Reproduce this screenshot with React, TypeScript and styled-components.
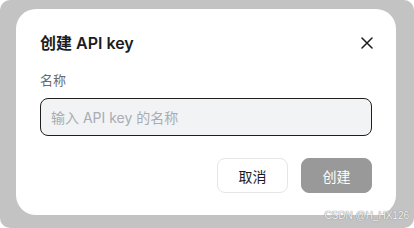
import React, { useState } from 'react';
import styled, { createGlobalStyle } from 'styled-components';

const GlobalStyle = createGlobalStyle`
  html, body {
    margin: 0;
    padding: 0;
    background: #ffffff;
  }
  body {
    font-family: "Inter", "Noto Sans CJK SC", sans-serif;
  }
`;

const Backdrop = styled.div`
  position: relative;
  width: 414px;
  height: 228px;
  box-sizing: border-box;
  padding: 9px 18px 13px 16px;
  background: #c3c3c3;
  border-radius: 10px;
  display: flex;
`;

const Dialog = styled.div`
  flex: 1;
  background: #ffffff;
  border-radius: 20px;
  padding: 22px 24px 22px 24px;
  display: flex;
  flex-direction: column;
`;

const Header = styled.div`
  display: flex;
  align-items: center;
  justify-content: space-between;
  height: 24px;
`;

const Title = styled.h2`
  margin: 0;
  font-size: 16px;
  line-height: 24px;
  font-weight: 600;
  color: #1c1c1e;
`;

const CloseButton = styled.button`
  width: 16px;
  height: 16px;
  margin-right: -3px;
  padding: 0;
  border: none;
  background: transparent;
  display: flex;
  align-items: center;
  justify-content: center;
  color: #1c1c1e;
  cursor: pointer;
`;

const Label = styled.label`
  margin-top: 15px;
  font-size: 13px;
  line-height: 20px;
  color: #6b6b6b;
`;

const NameInput = styled.input`
  margin-top: 8px;
  height: 38px;
  box-sizing: border-box;
  padding: 0 10px;
  border: 1px solid #1f1f1f;
  border-radius: 8px;
  background: #f2f3f5;
  font-family: inherit;
  font-size: 14px;
  color: #1c1c1e;
  outline: none;

  &::placeholder {
    color: #a9acb3;
  }
`;

const Footer = styled.div`
  margin-top: 22px;
  display: flex;
  justify-content: flex-end;
  gap: 13px;
`;

const Button = styled.button<{ $primary?: boolean }>`
  width: 71px;
  height: 35px;
  box-sizing: border-box;
  border-radius: 8px;
  border: 1px solid ${p => (p.$primary ? '#999999' : '#e6e6e6')};
  background: ${p => (p.$primary ? '#999999' : '#ffffff')};
  color: ${p => (p.$primary ? '#ffffff' : '#1c1c1e')};
  font-family: inherit;
  font-size: 14px;
  cursor: pointer;
`;

const Watermark = styled.span`
  position: absolute;
  right: 5px;
  bottom: 7px;
  font-family: "Liberation Sans", "Noto Sans", sans-serif;
  font-size: 10px;
  line-height: 10px;
  color: #f4f4f4;
  text-shadow: 0 0 1px #8a8a8a, 0 0 1px #8a8a8a;
`;

const App: React.FC = () => {
  const [name, setName] = useState('');

  return (
    <>
      <GlobalStyle />
      <Backdrop>
        <Dialog>
          <Header>
            <Title>创建 API key</Title>
            <CloseButton aria-label="关闭">
              <svg width="12" height="12" viewBox="0 0 12 12" fill="none">
                <path d="M1 1L11 11M11 1L1 11" stroke="currentColor" strokeWidth="1.5" strokeLinecap="round" />
              </svg>
            </CloseButton>
          </Header>
          <Label>名称</Label>
          <NameInput
            value={name}
            onChange={e => setName(e.target.value)}
            placeholder="输入 API key 的名称"
          />
          <Footer>
            <Button>取消</Button>
            <Button $primary disabled={!name.trim()}>创建</Button>
          </Footer>
        </Dialog>
        <Watermark>CSDN @H_HX126</Watermark>
      </Backdrop>
    </>
  );
};

export default App;
